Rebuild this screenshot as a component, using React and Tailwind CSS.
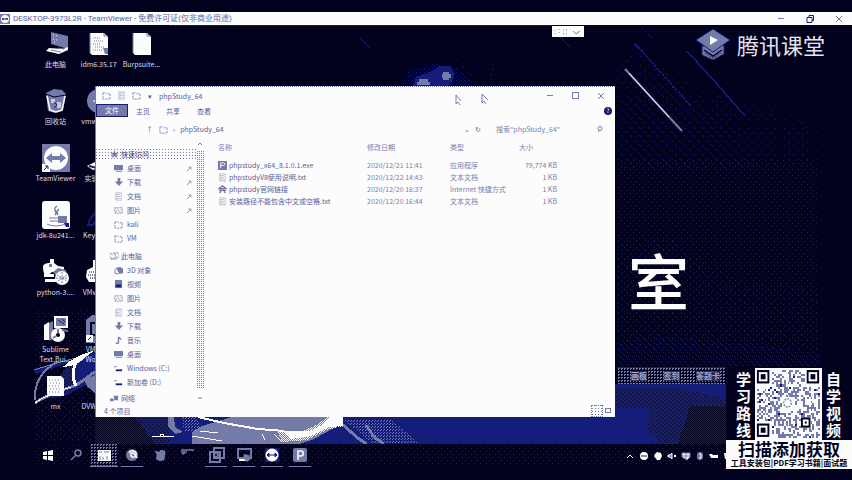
import React from "react";

const N = "#03021e";
const B = "#141e7a";
const G = "#757ba8";
const W = "#fcfcfc";

/* ---------- wallpaper ---------- */

function Dots({ id, size, color, points }) {
  return (
    <pattern id={id} width={size} height={size} patternUnits="userSpaceOnUse">
      {points.map(([x, y]) => (
        <rect key={x + "-" + y} x={x} y={y} width="1" height="1" fill={color} />
      ))}
    </pattern>
  );
}

function Wallpaper() {
  return (
    <svg
      className="absolute inset-0 h-full w-full"
      viewBox="0 0 852 480"
      preserveAspectRatio="xMidYMid slice"
      shapeRendering="crispEdges"
      aria-hidden="true"
    >
      <defs>
        <Dots id="thin" size="6" color={B} points={[[0, 1], [3, 4]]} />
        <Dots id="mid" size="4" color={B} points={[[0, 0], [2, 2]]} />
        <Dots id="faint" size="9" color={B} points={[[1, 2], [6, 6]]} />
        <Dots id="shade" size="4" color={N} points={[[0, 0], [2, 2]]} />
        <Dots id="shadeDense" size="2" color={N} points={[[0, 0], [1, 1]]} />
        <Dots id="greyMid" size="3" color={G} points={[[0, 0], [2, 1]]} />
        <Dots id="whiteMid" size="2" color={W} points={[[0, 0], [1, 1]]} />
      </defs>

      {/* streaks and glow at the top */}
      <path d="M170 25.500H552" stroke={B} strokeDasharray="3 1" />
      <path d="M360 38l11 11M560 37l10 10" stroke={B} />
      <path d="M400 84l10-14 24-6 22 3 12 10 2 9z" fill="url(#mid)" />
      <path d="M413 86l3-9 14-5 10-6h10l5 8-3 8-4 4z" fill={B} />
      <path d="M419 79h9v3h2v3h-13v-3h2z" fill={G} />
      <path d="M443 72h6v2h2v4h-2v2h-6v-2h-1v-4h1z" fill={G} />
      <path d="M456 60l24 25M478 66l12 12 4-14" stroke={B} fill="none" strokeDasharray="1 4" />

      {/* right side haze */}
      <path d="M616 60l20-8 50 30 60 20 72 30v35H616z" fill="url(#faint)" />
      <path d="M616 100l40-20 50 30 40 30v25H616z" fill="url(#faint)" transform="translate(3 3)" />
      <rect x="616" y="160" width="202" height="208" fill="url(#thin)" />
      <path d="M616 340l40-6 40 4 60 6 62 10v14H616z" fill="url(#thin)" transform="translate(2 1)" />
      <path d="M616 240h60l60 40 82 10v60H616z" fill="url(#faint)" />
      <path d="M635 44l8 8 12 14 36 40" stroke={B} fill="none" strokeWidth="1.500" strokeDasharray="3 1" />
      <path d="M642 28l10 10" stroke={B} strokeDasharray="2 2" />
      <path d="M687 51l30 33 28 32" stroke={B} fill="none" strokeWidth="1.500" />
      <path d="M625 69l57 62" stroke={G} strokeWidth="2" shapeRendering="auto" />
      <path d="M629 73l40 44" stroke={W} strokeWidth="1" shapeRendering="auto" />
      <path d="M764 118l16-17 30 30" stroke={B} fill="none" strokeDasharray="1 4" />

      {/* floor */}
      <rect x="95" y="384" width="640" height="60" fill={B} />
      <path d="M616 388h60l50 10v10h-110z" fill="url(#shade)" />
      <path d="M650 400h76v44h-64l-14-16z" fill="url(#shade)" />
      <path d="M690 406h36v38h-48z" fill="url(#shadeDense)" />

      {/* left corner artwork */}
      <rect x="36" y="310" width="60" height="40" fill="url(#thin)" />
      <rect x="34" y="350" width="62" height="92" fill="url(#thin)" />
      <rect x="36" y="372" width="60" height="70" fill="url(#faint)" />
      <path d="M50 398c4-16 12-28 24-36l21-10v28l-30 16z" fill={B} />
      <path d="M50 398c4-16 12-28 24-36v28z" fill="url(#shade)" />
      <path d="M34 369l20-6 22-3-22 8-18 6z" fill={B} />
      <path d="M34 370l16-5 26-7" stroke={G} fill="none" />
      <path d="M35 400c-1-16 6-29 22-38" stroke={G} strokeWidth="2" fill="none" />
      <path d="M35 403c8-6 24-12 36-16s18-12 24-15" stroke={G} strokeWidth="3" fill="none" />
      <path d="M35 403c8-6 24-12 36-16" stroke={W} fill="none" />
      <path d="M63 367c4-5 12-9 18-12l14-5-8 6c-5 5-11 9-17 10z" fill={W} />
      <path d="M77 361c-5 8-5 17-1 25" stroke={W} strokeWidth="3" fill="none" />
      <path d="M84 380l11-5v19l-8-8z" fill={G} />

      {/* band below the explorer window */}
      <path d="M95 417h40l20 27H95z" fill="url(#shadeDense)" />
      <path d="M130 417h40v27h-34z" fill="url(#shade)" />
      <path d="M168 417h6l1 10 8 5-8 2-7-8z" fill={G} />
      <path d="M182 417h14l8 14h-20z" fill="url(#greyMid)" />
      <path d="M192 444v-12l10-6 30-9h111v6l-18 10-20 11z" fill={G} />
      <path d="M198 417l26 6 34 6 26 2" stroke={W} strokeWidth="2" fill="none" />
      <path d="M152 436h22M192 436l30 5M200 431l18 2" stroke={W} fill="none" />
      <path d="M160 434h3v2h-3zM262 434l3 6M274 434l8 8" stroke={W} fill="none" />
      <path d="M282 442l-4-10h22l16-7 12-8h15v9l-16 4-20 10z" fill="url(#whiteMid)" />
      <path d="M284 431h26l14-7 6-7h13v9l-14 1-18 9-20 3z" fill={W} />
      <path d="M300 444l26-9 17-8 13 17z" fill={B} />
      <path d="M343 419h48l14 12 14 13h-46z" fill="url(#greyMid)" />
      <path d="M343 425l16 14 8 5M366 425l8 12 10 7" stroke={G} strokeWidth="3" fill="none" />

      {/* edges and task bar */}
      <rect x="0" y="444" width="852" height="36" fill={N} />
      <rect x="36" y="444" width="690" height="22" fill="url(#thin)" />
      <rect x="0" y="26" width="34" height="420" fill={N} />
      <rect x="819" y="26" width="33" height="420" fill={N} />
    </svg>
  );
}

/* ---------- desktop icons ---------- */

const page = (
  <g>
    <path d="M5 3h14l4 4v18H7l-2-2z" fill={W} />
    <path d="M5 3v20M19 3v3h4" stroke={G} fill="none" />
  </g>
);

const art = {
  pc: (
    <g>
      <path d="M9 2l17 4v13l-17-5z" fill={G} />
      <path d="M11 5l5 1M11 9l4 1M12 12h3" stroke={W} strokeDasharray="1 2" />
      <path d="M7 18l14 1 5-2v3l-9 4-13-3z" fill={W} />
      <path d="M9 20l10 2M16 18l6 1" stroke={G} />
    </g>
  ),
  zip: (
    <g>
      {page}
      <path d="M8 8h8M9 11h10M8 14h7M10 17h9M8 20h9" stroke={G} strokeDasharray="1 1" />
      <path d="M18 18h5v6h-3z" fill={G} />
    </g>
  ),
  page,
  bin: (
    <g>
      <path d="M4 6l8-4 8 1 4 4-3 17-8 2-7-2z" fill={G} />
      <path d="M4 7l8 3 12-2" stroke={N} fill="none" />
      <path d="M5 9l3 14M23 9l-3 14M8 23l6 2 6-2" stroke={W} strokeWidth="1.500" fill="none" />
      <path d="M9 12h4v4H9zM15 15h4v6h-4z" fill={W} opacity=".6" />
      <path d="M12 15l3 3-3 3" stroke={B} fill="none" />
    </g>
  ),
  tv: (
    <g>
      <rect x="0" y="0" width="28" height="28" fill={G} />
      <circle cx="14" cy="14" r="12" fill={W} />
      <path d="M4 14l6-5v3h8V9l6 5-6 5v-3h-8v3z" fill={G} />
      <path d="M0 20h8v8H0z" fill={W} />
      <path d="M2 26l4-4M3 22h3v3" stroke={B} fill="none" />
    </g>
  ),
  jdk: (
    <g>
      <rect x="0" y="0" width="28" height="28" rx="3" fill={W} />
      <path d="M15 5c-6 4 2 5-2 9M17 8c-4 3 0 4-2 6" stroke={G} strokeWidth="1.500" fill="none" />
      <path d="M7 17h14M8 20h12M5 23c6 3 14 2 18 0" stroke={G} fill="none" />
      <rect x="16" y="15" width="9" height="7" fill={G} />
      <path d="M22 22h5v4h-3z" fill={B} />
    </g>
  ),
  python: (
    <g>
      <path d="M1 9c0-3 3-4 7-4V1h4v4l4 3 6 1v5H10l-6 5c-2-3-3-6-3-10z" fill={W} />
      <path d="M7 6h3v3H7zM11 14l5-4 8 2v5l-9 2z" fill={G} />
      <path d="M2 16h10v3H2zM3 21h11v3H3z" fill={W} />
      <circle cx="20" cy="20" r="7" fill={W} />
      <path d="M15 17l10 6M16 23l9-6M20 14v12M14 20h12" stroke={G} strokeDasharray="2 1" />
    </g>
  ),
  setup: (
    <g>
      <path d="M12 1h14v12H12z" fill={W} />
      <path d="M14 3h10v8H14z" fill={G} />
      <path d="M16 5l6 4M20 4l3 3" stroke={B} />
      <path d="M2 10l5-3v18H2z" fill={W} />
      <path d="M7 8l4-2v18l-4 2z" fill={G} />
      <circle cx="16" cy="20" r="7" fill={W} />
      <circle cx="16" cy="20" r="2" fill={N} />
      <path d="M16 14v4M11 23l3-2M20 15l6 1" stroke={G} strokeWidth="2" />
    </g>
  ),
  notes: (
    <g>
      <path d="M5 4h14l3 3v17H8l-3-2z" fill={W} />
      <path d="M7 8h12M8 11h12M7 14h12M8 17h12M7 20h12" stroke={G} strokeDasharray="1 2" />
    </g>
  ),
  disc: (
    <g>
      <circle cx="14" cy="14" r="12" fill={G} />
      <path d="M8 14l8-4v9z" fill={W} />
    </g>
  ),
  lab: (
    <g>
      <path d="M2 22l8-4 6 5-8 3z" fill={W} />
      <path d="M4 22l8 2" stroke={B} strokeWidth="2" />
    </g>
  ),
  key: <path d="M3 24l2-6 12-14v8L8 24z" stroke={B} strokeWidth="2" fill="none" />,
  gear: (
    <g>
      <path d="M8 2h10v8h6v14H4l-3-5 1-7 6-3z" fill={W} />
      <path d="M4 14h8M3 17h8M5 20h7" stroke={G} strokeDasharray="1 1" strokeWidth="2" />
    </g>
  ),
  vm: (
    <g>
      <path d="M1 5l6-5h17v28H1z" fill={G} />
      <path d="M6 8h8v12H6z" stroke={N} fill="none" strokeWidth="2" />
      <path d="M1 20h7v7H1z" fill={W} />
      <path d="M3 25l3-3" stroke={B} />
    </g>
  ),
  shield: <path d="M2 8l8-5 12 3v12l-9 9-5-9-6-3z" fill={G} />,
};

const columns = [
  [
    ["pc", "此电脑"],
    ["bin", "回收站"],
    ["tv", "TeamViewer"],
    ["jdk", "jdk-8u241..."],
    ["python", "python-3...."],
    ["setup", "Sublime", "Text.Bui..."],
    ["notes", "mx"],
  ],
  [
    ["zip", "idm6.35.17"],
    ["disc", "vmware-..."],
    ["lab", "实验工具"],
    ["key", "KeyGen..."],
    ["gear", "VMware..."],
    ["vm", "VMware", "Works..."],
    ["shield", "DVWA-m..."],
  ],
  [["page", "Burpsuite..."]],
];

function DesktopIcons() {
  return (
    <div className="relative flex pt-[5px] pl-[34px]">
      {columns.map((col, i) => (
        <div key={i} className="flex w-[43px] shrink-0 flex-col">
          {col.map(([kind, ...lines]) => (
            <button
              key={kind}
              type="button"
              className="flex h-[57px] w-full flex-col items-center gap-px text-[7px] leading-[10px] whitespace-nowrap text-[#dcdeea]"
            >
              <svg viewBox="0 0 28 28" className="h-7 w-7 shrink-0" aria-hidden="true">
                {art[kind]}
              </svg>
              <span>
                {lines.map((l) => (
                  <span key={l} className="block">
                    {l}
                  </span>
                ))}
              </span>
            </button>
          ))}
        </div>
      ))}
    </div>
  );
}

/* ---------- small glyphs ---------- */

const small = {
  folder: <path d="M1 2h3l1 1h4v6H1z" stroke={G} fill="none" strokeDasharray="2 1" />,
  monitor: <path d="M0 1h10v6H0zM2 8h7v1H2z" fill={G} />,
  down: <path d="M4 0h3v4h3L5.500 9 1 4h3z" fill={G} />,
  doc: <path d="M2 1h6v8H2zM3 3h4M3 5h4M3 7h4" stroke={G} fill="none" strokeDasharray="1 1" />,
  pic: <path d="M1 2h8v6H1zM2 7l2-3 2 2 2-2" stroke={G} fill="none" strokeDasharray="2 1" />,
  pc: <path d="M0 2h6v5H0zM4 1h6v5H6M1 8h7" stroke={G} fill="none" strokeDasharray="2 1" />,
  cube: (
    <g>
      <path d="M2 2l5-1 3 2v5l-4 1z" fill={G} />
      <path d="M1 3v5l4 1" stroke={G} fill="none" />
    </g>
  ),
  video: (
    <g>
      <path d="M1 0h8v9H1z" fill={G} />
      <path d="M2 5h6v3H2z" fill={B} />
    </g>
  ),
  music: <path d="M5 1v7M5 1l3 3M2 8h3" stroke={G} strokeWidth="1.500" fill="none" />,
  drive: (
    <g>
      <path d="M0 3h3" stroke={G} />
      <path d="M2 6h7v2H2z" fill={B} />
    </g>
  ),
  star: <path d="M5 0l1 3h4L7 5l1 4-3-2-3 2 1-4-3-2h4z" fill={G} />,
  net: <path d="M4 2h5v5H5zM0 5h4v3H0z" fill={G} />,
  php: (
    <g>
      <path d="M0 0h10v10H0z" fill={G} />
      <path d="M3 8V2h3c2 0 2 3 0 3H3" stroke={W} fill="none" />
    </g>
  ),
  web: <path d="M5 1l4 3H1zM1 6h8M2 9l2-4M8 9L6 5" stroke={G} strokeWidth="1.500" fill="none" />,
};

function Glyph({ name }) {
  return (
    <svg viewBox="0 0 10 10" className="h-[9px] w-[9px] shrink-0" aria-hidden="true">
      {small[name]}
    </svg>
  );
}

/* ---------- explorer ---------- */

const quick = [
  ["monitor", "桌面", true],
  ["down", "下载", true],
  ["doc", "文档", true],
  ["pic", "图片", true],
  ["folder", "kali"],
  ["folder", "VM"],
];
const computer = [
  ["cube", "3D 对象"],
  ["video", "视频"],
  ["pic", "图片"],
  ["doc", "文档"],
  ["down", "下载"],
  ["music", "音乐"],
  ["monitor", "桌面"],
  ["drive", "Windows (C:)"],
  ["drive", "新加卷 (D:)"],
];
const files = [
  ["php", "phpstudy_x64_8.1.0.1.exe", "2020/12/21 11:41", "应用程序", "79,774 KB"],
  ["doc", "phpstudyV8使用说明.txt", "2020/12/22 14:43", "文本文档", "1 KB"],
  ["web", "phpstudy官网链接", "2020/12/20 16:37", "Internet 快捷方式", "1 KB"],
  ["doc", "安装路径不能包含中文或空格.txt", "2020/12/20 16:44", "文本文档", "1 KB"],
];

function NavItem({ item }) {
  const [icon, label, pinned] = item;
  return (
    <li className="flex h-[14px] items-center gap-1 pr-1 pl-[18px]">
      <Glyph name={icon} />
      <span className="flex-1">{label}</span>
      {pinned && (
        <svg viewBox="0 0 6 6" className="h-[5px] w-[5px]" aria-hidden="true">
          <path d="M0 6l3-3M2 1l3 3M3 0l3 3" stroke={G} />
        </svg>
      )}
    </li>
  );
}

function Explorer() {
  return (
    <section className="absolute top-[61px] left-[95px] flex h-[331px] w-[520px] flex-col border-l border-[#757ba8] bg-[#fcfcfc] text-[7px] leading-[12px] text-[#585f9a]">
      <header className="flex h-[18px] shrink-0 items-center gap-[6px] border-t border-dotted border-[#757ba8] pl-[6px]">
        <Glyph name="folder" />
        <Glyph name="doc" />
        <Glyph name="folder" />
        <span className="w-[6px] text-center">▾</span>
        <h1 className="flex-1">phpStudy_64</h1>
        <div className="flex items-center gap-[19px] pr-[11px]">
          <button type="button" aria-label="最小化" className="h-px w-[6px] bg-[#757ba8]" />
          <button type="button" aria-label="最大化" className="h-[7px] w-[7px] border border-[#757ba8]" />
          <button type="button" aria-label="关闭">
            <svg viewBox="0 0 6 6" className="h-[6px] w-[6px]">
              <path d="M0 0l6 6M6 0L0 6" stroke={G} />
            </svg>
          </button>
        </div>
      </header>

      <nav className="flex h-[13px] shrink-0 items-center">
        <button type="button" className="h-[13px] w-8 border border-[#141e7a] bg-[#757ba8] text-[#fcfcfc]">
          <span className="block leading-[11px]">文件</span>
        </button>
        <button type="button" className="w-[30px]">主页</button>
        <button type="button" className="w-[30px]">共享</button>
        <button type="button" className="w-[32px]">查看</button>
        <span className="flex-1" />
        <button
          type="button"
          aria-label="帮助"
          className="mr-[3px] h-2 w-2 rounded-full bg-[#141e7a] text-[6px] leading-[8px] text-[#fcfcfc]"
        >
          ?
        </button>
      </nav>

      <div className="flex h-6 shrink-0 items-center gap-[5px] pl-[50px]">
        <span className="w-[8px]">↑</span>
        <Glyph name="folder" />
        <span>›</span>
        <span className="flex-1">phpStudy_64</span>
        <span>⌄</span>
        <span>↻</span>
        <input
          aria-label="搜索"
          placeholder={'搜索"phpStudy_64"'}
          className="ml-[10px] w-[96px] outline-none placeholder:text-[#8085b0]"
        />
        <svg viewBox="0 0 6 7" className="mr-3 h-[7px] w-[6px]" aria-hidden="true">
          <path d="M1 6l2-2" stroke={G} />
          <circle cx="3" cy="2.500" r="2" stroke={G} fill="none" />
        </svg>
      </div>

      <div className="flex min-h-0 flex-1">
        <aside className="flex w-[100px] shrink-0 flex-col pt-[6px]">
          <div className="flex h-[14px] shrink-0 items-center gap-[2px] bg-[conic-gradient(from_180deg_at_1px_2px,#757ba8_25%,transparent_0)] bg-[length:3px_3px] pl-[14px] text-[#3f478c]">
            <Glyph name="star" />
            <span>快速访问</span>
          </div>
          <ul>
            {quick.map((q) => (
              <NavItem key={q[1]} item={q} />
            ))}
          </ul>
          <div className="mt-1 flex h-[14px] shrink-0 items-center gap-[2px] pl-[14px]">
            <Glyph name="pc" />
            <span>此电脑</span>
          </div>
          <ul>
            {computer.map((q) => (
              <NavItem key={q[1]} item={q} />
            ))}
          </ul>
          <div className="mt-1 flex h-[10px] shrink-0 items-center gap-[2px] pl-[14px] leading-[10px]">
            <Glyph name="net" />
            <span>网络</span>
          </div>
        </aside>
        <div className="flex w-2 shrink-0 flex-col items-center">
          <svg viewBox="0 0 8 10" className="h-[10px] w-2" aria-hidden="true">
            <path d="M2 4l2-2 2 2" stroke={G} fill="none" />
          </svg>
          <div className="w-2 flex-1 bg-[conic-gradient(#757ba8_25%,transparent_0)] bg-[length:2px_2px]" />
          <svg viewBox="0 0 8 16" className="h-4 w-2" aria-hidden="true">
            <path d="M2 9l2 2 2-2" stroke={G} fill="none" />
          </svg>
        </div>
        <div className="flex-1 pl-[14px]">
          <table className="w-[339px] table-fixed border-collapse text-left">
            <thead className="text-[#7a80ac]">
              <tr className="h-[18px] align-top">
                <th className="w-[149px] p-0 font-normal">名称</th>
                <th className="w-[83px] p-0 font-normal">修改日期</th>
                <th className="w-[69px] p-0 font-normal">类型</th>
                <th className="p-0 font-normal">大小</th>
              </tr>
            </thead>
            <tbody>
              {files.map(([icon, name, date, type, size]) => (
                <tr key={name} className="h-3 text-[#7a80ac]">
                  <td className="p-0 text-[#585f9a]">
                    <span className="flex items-center gap-[2px]">
                      <Glyph name={icon} />
                      <span>{name}</span>
                    </span>
                  </td>
                  <td className="p-0">{date}</td>
                  <td className="p-0">{type}</td>
                  <td className="p-0 text-right">{size}</td>
                </tr>
              ))}
            </tbody>
          </table>
        </div>
      </div>

      <footer className="flex h-[13px] shrink-0 items-center gap-[2px] pr-1 pl-2 leading-[10px]">
        <span className="flex-1">4 个项目</span>
        <span className="h-3 w-3 border border-dotted border-[#757ba8] bg-[conic-gradient(from_180deg_at_1px_2px,#757ba8_25%,transparent_0)] bg-[length:3px_3px]" />
        <span className="h-[5px] w-[6px] border border-[#757ba8]" />
      </footer>
    </section>
  );
}

/* ---------- task bar ---------- */

const tasks = [
  ["start", false, <path key="a" d="M5 7l4-1v4H5zM10 6l5-1v5h-5zM5 11h4v4l-4-1zM10 11h5v5l-5-1z" fill={W} />],
  [
    "search",
    false,
    <g key="a">
      <circle cx="12" cy="8" r="3" stroke={G} strokeWidth="1.500" fill="none" />
      <path d="M10 10l-5 5" stroke={G} strokeWidth="1.500" />
    </g>,
  ],
  [
    "files",
    true,
    <g key="a">
      <path d="M4 5h13v11H4z" fill={W} />
      <path d="M5 7h3M10 7h5M6 15v-4M9 15v-3M13 15v-4" stroke={G} fill="none" />
    </g>,
  ],
  [
    "browser",
    true,
    <g key="a">
      <circle cx="10" cy="10" r="6" fill={G} />
      <path d="M7 8c2-4 8-2 7 2s-6 2-5-1 4 0 6 4" stroke={W} strokeWidth="1.500" fill="none" />
    </g>,
  ],
  ["app", false, <path key="a" d="M5 6l4 1 2-2 4 1v4l-1 5-4 1-4-2 1-4z" fill={G} strokeDasharray="1 1" stroke={G} />],
  ["terminal", false, <path key="a" d="M3 5h13M3 7h6M4 9l3-1" stroke={G} strokeWidth="1.500" />],
  [
    "vm",
    true,
    <g key="a" stroke={G} strokeWidth="2" fill="none">
      <path d="M8 3h10v10H8z" />
      <path d="M4 7h10v10H4z" />
      <circle cx="10" cy="10" r="2" />
    </g>,
  ],
  [
    "remote",
    true,
    <g key="a">
      <path d="M4 4h13v9H4z" stroke={G} strokeWidth="2" fill="none" />
      <path d="M5 14h8v2H5z" fill={W} />
      <path d="M10 9l5 1 2 4-4 3-4-4z" fill={G} />
    </g>,
  ],
  [
    "tv",
    true,
    <g key="a">
      <rect x="3" y="3" width="14" height="14" fill={B} />
      <circle cx="10" cy="10" r="6.500" fill={W} />
      <path d="M5 10l2-2v4zM15 10l-2-2v4zM6 10h8" fill={B} stroke={B} />
    </g>,
  ],
  [
    "php",
    true,
    <g key="a">
      <rect x="3" y="3" width="14" height="14" rx="2" fill={G} />
      <path d="M8 15V6h3c3 0 3 5 0 5H8" stroke={W} strokeWidth="1.500" fill="none" />
    </g>,
  ],
];

const tray = [
  ["up", <path key="a" d="M2 7l3-3 3 3" stroke={W} fill="none" />],
  [
    "tv",
    <g key="a">
      <circle cx="5" cy="5" r="4" fill={W} />
      <path d="M2 5h6" stroke={B} />
    </g>,
  ],
  ["hand", <path key="a" d="M2 3l2-2 4 1 1 3-2 4H4L1 5z" fill={W} />],
  ["sound", <path key="a" d="M1 4h2l2-2v6L3 6H1zM7 4l2 2M9 4L7 6" stroke={W} fill={G} />],
  ["shield", <path key="a" d="M1 2h8v4L6 9 1 6zM5 2v6M1 5h8" fill={W} stroke={G} />],
  [
    "sync",
    <g key="a">
      <rect x="2" y="1" width="6" height="8" rx="3" fill={G} />
      <path d="M4 3h2v4H4" stroke={W} fill="none" />
    </g>,
  ],
  ["power", <path key="a" d="M0 3h3l1 1h5v3H2z" fill={W} />],
  ["wifi", <path key="a" d="M1 2h7v3H4v3H2z" fill={W} />],
];

function Taskbar() {
  return (
    <footer className="relative flex h-[23px] items-stretch px-[34px]">
      {tasks.map(([name, open, drawing]) => (
        <button
          key={name}
          type="button"
          aria-label={name}
          className={
            name === "files"
              ? "flex w-7 items-center justify-center border-b border-[#757ba8] bg-[conic-gradient(#757ba8_25%,transparent_0)] bg-[length:3px_3px]"
              : open
                ? "mx-[3px] flex w-[22px] items-center justify-center border-b border-[#757ba8]"
                : "flex w-7 items-center justify-center border-b border-transparent"
          }
        >
          <svg viewBox="0 0 20 20" className="h-5 w-5 shrink-0">
            {drawing}
          </svg>
        </button>
      ))}
      <span className="flex-1" />
      <div className="mr-[85px] flex items-center gap-1">
        {tray.map(([name, drawing]) => (
          <svg key={name} viewBox="0 0 10 10" className="h-[10px] w-[10px]" aria-hidden="true">
            {drawing}
          </svg>
        ))}
      </div>
    </footer>
  );
}

/* ---------- overlays ---------- */

const MODULES = 33;

function inFinder(x, y) {
  const edge = MODULES - 8;
  return (x < 8 && y < 8) || (x >= edge && y < 8) || (x < 8 && y >= edge);
}

function QrCode() {
  const cells = [];
  let seed = 77;
  for (let y = 0; y < MODULES; y++) {
    for (let x = 0; x < MODULES; x++) {
      seed = (seed * 1103515245 + 12345) % 2147483648;
      const middle = Math.abs(x - 16) < 4 && Math.abs(y - 16) < 4;
      const align = x > 22 && x < 28 && y > 22 && y < 28;
      if (!inFinder(x, y) && !middle && !align && (seed >> 12) % 100 < 46) {
        cells.push(<rect key={x + "," + y} x={x} y={y} width="1" height="1" fill={(seed >> 5) % 23 === 0 ? B : G} />);
      }
    }
  }
  const finder = (x, y) => (
    <g key={x + "f" + y}>
      <rect x={x + 0.5} y={y + 0.5} width="5.500" height="5.500" fill="none" stroke={N} />
      <rect x={x + 2} y={y + 2} width="2.500" height="2.500" fill={N} />
    </g>
  );
  return (
    <svg viewBox="-1 -1 35 35" preserveAspectRatio="none" className="h-[72px] w-[67px] bg-[#fcfcfc]" role="img" aria-label="二维码">
      <g shapeRendering="crispEdges">{cells}</g>
      {[finder(0, 0), finder(26, 0), finder(0, 26)]}
      <rect x="23.500" y="23.500" width="4" height="4" fill={W} stroke={N} />
      <rect x="25" y="25" width="1" height="1" fill={N} />
      <circle cx="16" cy="16" r="2" fill="none" stroke={G} strokeWidth=".6" strokeDasharray="1 .5" />
    </svg>
  );
}

function SideText({ text }) {
  return (
    <div className="w-[15px] pt-[2px] text-center text-[15px] leading-[17px] font-bold text-[#fcfcfc]">
      {[...text].map((c) => (
        <p key={c}>{c}</p>
      ))}
    </div>
  );
}

function QrCard() {
  return (
    <aside className="absolute right-0 bottom-[11px] flex w-[126px] flex-col bg-[#03021e]">
      <div className="flex h-[73px] items-start gap-[4px] pt-px pl-[10px]">
        <SideText text="学习路线" />
        <QrCode />
        <SideText text="自学视频" />
      </div>
      <div className="flex flex-col items-center bg-[#fcfcfc] font-bold whitespace-nowrap text-[#03021e]">
        <p className="text-[17px] leading-[17px]">扫描添加获取</p>
        <p className="text-[8px] leading-[12px]">工具安装包|PDF学习书籍|面试题</p>
      </div>
    </aside>
  );
}

function Brand() {
  return (
    <div className="absolute top-[3px] right-[27px] flex items-center gap-[6px] text-[#e4e5ee]">
      <svg viewBox="0 0 36 32" className="h-8 w-9" aria-hidden="true">
        <path d="M7 18v9l11 5 11-6v-9z" fill={G} stroke={B} />
        <path d="M9 22l9 6 9-6" stroke={N} strokeWidth="1.500" fill="none" />
        <path d="M10 25l8 5 8-5" stroke={N} strokeDasharray="1 1" fill="none" />
        <path d="M18 1l17 11-17 12L1 12z" fill={G} stroke={B} />
        <path d="M15 8l8 4-8 5z" fill={W} />
      </svg>
      <span className="text-[22px] leading-[30px]">腾讯课堂</span>
    </div>
  );
}

export default function App() {
  return (
    <main className="relative flex min-h-screen flex-col overflow-hidden bg-[#03021e] pt-3 font-['Noto_Sans_CJK_SC',sans-serif]">
      <Wallpaper />

      <header className="relative flex h-[13px] shrink-0 items-center gap-[3px] bg-[#fcfcfc] text-[8px] leading-[13px] whitespace-nowrap text-[#5a629c]">
        <svg viewBox="0 0 10 10" className="h-[10px] w-[10px]" aria-hidden="true">
          <path d="M0 0h10v10H0z" fill={G} />
          <circle cx="5" cy="5" r="4" fill={W} />
          <path d="M2 5h6M3 4v2M7 4v2" stroke={B} />
        </svg>
        <h2 className="flex-1 font-['Roboto','Noto_Sans_CJK_SC',sans-serif]">
          DESKTOP-3973L2R - TeamViewer - 免费许可证(仅非商业用途)
        </h2>
        <div className="flex items-center gap-[22px] pr-[10px]">
          <button type="button" aria-label="最小化" className="h-px w-[6px] bg-[#757ba8]" />
          <button type="button" aria-label="还原">
            <svg viewBox="0 0 8 8" className="h-2 w-2">
              <path d="M1 2.500h5v5H1zM3 2V.5h4.500v5H6" stroke={B} fill="none" />
            </svg>
          </button>
          <button type="button" aria-label="关闭">
            <svg viewBox="0 0 6 6" className="h-[6px] w-[6px]">
              <path d="M0 0l6 6M6 0L0 6" stroke={G} />
            </svg>
          </button>
        </div>
      </header>

      <div className="relative flex-1">
        <DesktopIcons />

        <button
          type="button"
          aria-label="展开工具栏"
          className="absolute top-px left-[552px] flex h-[11px] w-8 items-center justify-end gap-1 bg-[#fcfcfc] pr-[3px]"
        >
          <svg viewBox="0 0 28 8" className="h-2 w-7" aria-hidden="true">
            <path d="M2 2v4M6 1v6M10 2h5M10 6h5" stroke={G} strokeDasharray="1 2" />
            <path d="M20 3l3 3 4-3" stroke={G} fill="none" />
          </svg>
        </button>

        <Brand />

        <div className="absolute top-[221px] left-[628px] text-[61px] leading-[68px] font-medium text-[#fcfcfc]">室</div>

        <div className="absolute top-[342px] right-[126px] left-[617px] flex h-[18px] items-center justify-between border-y border-[#141e7a] bg-[#03021e] bg-[conic-gradient(#757ba8_25%,transparent_0)] bg-[length:3px_3px] pr-[6px] pl-[14px] text-[8px] leading-[10px] font-bold text-[#a0a4c6]">
          <span className="bg-[#2a2d5c]">画板</span>
          <span className="bg-[#2a2d5c]">签到</span>
          <span className="bg-[#2a2d5c]">答题卡</span>
        </div>

        <Explorer />

        <svg viewBox="0 0 36 12" className="absolute top-[69px] left-[455px] h-3 w-9" aria-hidden="true">
          <path d="M1 1v9l2-2 2 3M1 1l5 6M27 0v9l2-2 2 3M27 0l6 6" stroke={G} fill="none" />
        </svg>
      </div>

      <Taskbar />
      <div className="h-[13px] shrink-0" />
      <QrCard />
    </main>
  );
}
